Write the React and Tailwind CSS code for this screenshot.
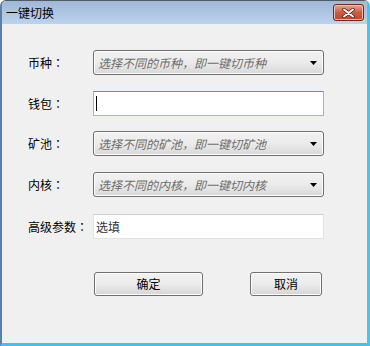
import React from "react";

const font = { fontFamily: '"Noto Sans CJK SC", "Microsoft YaHei", sans-serif' };

// Combo box styled like a Win7 dropdown
const Combo = ({ text }) => (
  <div className="relative h-[25px] w-[231px] rounded-[3px] border border-[#707070] bg-gradient-to-b from-[#f2f2f2] via-[#ebebeb] to-[#d8d8d8] shadow-[inset_0_0_0_1px_#fcfcfc]">
    <span className="absolute left-[4px] top-[3px] text-[12px] italic leading-[17px] text-[#6d6d6d]">
      {text}
    </span>
    <svg className="absolute right-[5px] top-[10px]" width="8" height="5" viewBox="0 0 8 5">
      <path d="M0 0h7L3.5 4z" fill="#000" />
    </svg>
  </div>
);

const Row = ({ label, children, className = "" }) => (
  <div className={`flex items-center ${className}`}>
    <div className="w-[65px] font-['Noto_Sans_CJK_TC',sans-serif] text-[12px] leading-[16px] text-black">
      {label}
    </div>
    {children}
  </div>
);

const Button = ({ children, className = "" }) => (
  <button
    className={`h-[24px] rounded-[3px] border border-[#707070] bg-gradient-to-b from-[#f2f2f2] via-[#ebebeb] to-[#d6d6d6] text-[12px] leading-[16px] text-black shadow-[inset_0_0_0_1px_#fcfcfc] ${className}`}
  >
    {children}
  </button>
);

export default function App() {
  return (
    <div
      className="flex h-[346px] w-[370px] flex-col overflow-hidden rounded-t-[6px] border-t border-l-2 border-r-[3px] border-b-[3px] border-t-[#545a63] border-l-[#5a7fa8] border-r-[#4cc4ea] border-b-[#3ec4ea]"
      style={font}
    >
      {/* title bar */}
      <div className="flex h-[23px] shrink-0 items-center justify-between bg-gradient-to-b from-[#9fb8d6] to-[#bcd3ec] pl-[4px] pr-[3px]">
        <span className="text-[12px] leading-[16px] text-black">一键切换</span>
        <div className="flex h-[17px] w-[31px] items-center justify-center rounded-[3px] border border-[#6e2a22] bg-gradient-to-b from-[#e8a493] via-[#cf5a44] to-[#c0442e] shadow-[inset_0_0_0_1px_#eebfb2]">
          <svg width="13" height="10" viewBox="0 0 13 10">
            <path
              d="M2 1.5L11 8.5M11 1.5L2 8.5"
              stroke="#4a1a14"
              strokeWidth="3.4"
              strokeLinecap="round"
            />
            <path
              d="M2 1.5L11 8.5M11 1.5L2 8.5"
              stroke="#fff"
              strokeWidth="2"
              strokeLinecap="round"
            />
          </svg>
        </div>
      </div>

      {/* client area */}
      <div className="flex flex-1 flex-col bg-[#f0f0f0] pl-[26px]">
        <Row label="币种：" className="mt-[26px]">
          <Combo text="选择不同的币种，即一键切币种" />
        </Row>
        <Row label="钱包：" className="mt-[16px]">
          <div className="relative h-[25px] w-[231px] border border-[#a2b8cf] border-t-[#5f8fc0] bg-white">
            <span className="absolute left-[2px] top-[4px] h-[15px] w-[1px] bg-black" />
          </div>
        </Row>
        <Row label="矿池：" className="mt-[15px]">
          <Combo text="选择不同的矿池，即一键切矿池" />
        </Row>
        <Row label="内核：" className="mt-[16px]">
          <Combo text="选择不同的内核，即一键切内核" />
        </Row>
        <Row label="高级参数：" className="mt-[17px]">
          <div className="flex h-[25px] w-[231px] items-center border border-[#e3e3e3] border-t-[#cfcfcf] bg-white pl-[2px]">
            <span className="text-[12px] leading-[16px] text-[#333]">选填</span>
          </div>
        </Row>
        <div className="mt-[33px] flex">
          <Button className="ml-[66px] w-[109px]">确定</Button>
          <Button className="ml-[47px] w-[72px]">取消</Button>
        </div>
      </div>
    </div>
  );
}
